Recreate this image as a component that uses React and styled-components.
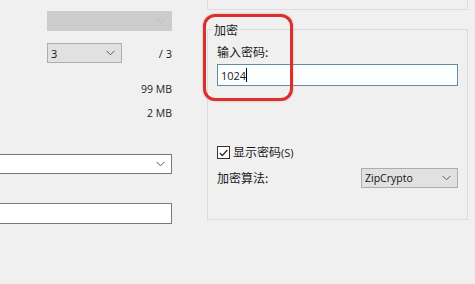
import React from 'react';
import styled, { createGlobalStyle } from 'styled-components';

const GlobalStyle = createGlobalStyle`
    html, body {
        margin: 0;
        padding: 0;
        background: #f0f0f0;
        overflow: hidden;
    }
    body {
        font-family: "Segoe UI", "Open Sans", "Noto Sans CJK SC", sans-serif;
        font-size: 10.5px;
        color: #1a1a1a;
    }
`

const Page = styled.div`
    position: relative;
    display: flex;
    width: 475px;
    height: 284px;
    background: #f0f0f0;
`

const LeftCol = styled.div`
    width: 172px;
    padding-top: 11px;
    display: flex;
    flex-direction: column;
`

const Select = styled.div`
    box-sizing: border-box;
    display: flex;
    align-items: center;
    justify-content: space-between;
    height: 20px;
    padding: 0 6px 0 3px;
    margin-left: ${p => p.$indent || 0}px;
    width: ${p => (p.$width ? `${p.$width}px` : 'auto')};
    background: ${p => (p.$variant === 'white' ? '#ffffff' : p.$variant === 'disabled' ? '#cccccc' : '#e1e1e1')};
    border: 1px solid ${p => (p.$variant === 'white' ? '#7a7a7a' : p.$variant === 'disabled' ? '#cccccc' : '#adadad')};
    border-left-width: ${p => (p.$cut ? 0 : 1)}px;
    color: #111;
`

const Chevron = ({ color = '#5a5a5a' }) => (
    <svg width="9" height="6" viewBox="0 0 9 6">
        <path d="M0.5 0.8 L4.5 4.8 L8.5 0.8" fill="none" stroke={color} strokeWidth="1" />
    </svg>
)

const PartsRow = styled.div`
    display: flex;
    align-items: center;
    justify-content: space-between;
    margin-top: 12px;
    margin-left: 47px;
    font-size: 11px;
`

const Value = styled.div`
    text-align: right;
    line-height: 16px;
    margin-top: ${p => p.$top}px;
`

const TextBox = styled.div`
    box-sizing: border-box;
    height: 21px;
    margin-top: ${p => p.$top}px;
    background: #ffffff;
    border: 1px solid #7a7a7a;
    border-left: 0;
`

const RightCol = styled.div`
    width: 261px;
    margin-left: 35px;
    display: flex;
    flex-direction: column;
`

const GroupTail = styled.div`
    height: 9px;
    border: 1px solid #dcdcdc;
    border-top: 0;
`

const Group = styled.fieldset`
    box-sizing: border-box;
    margin: 12px 0 0 0;
    padding: 0 9px;
    height: 198px;
    border: 1px solid #dcdcdc;
    display: flex;
    flex-direction: column;
`

const Legend = styled.legend`
    padding: 0 1px;
    margin-left: -4px;
    line-height: 15px;
    font-size: 12px;
    font-family: "Noto Sans CJK SC", sans-serif;
`

const Label = styled.div`
    font-family: "Noto Sans CJK SC", sans-serif;
    font-size: 12px;
    line-height: 16px;
    margin-top: ${p => p.$top || 0}px;
`

const PasswordInput = styled.div`
    box-sizing: border-box;
    display: flex;
    align-items: center;
    height: 22px;
    margin-top: 4px;
    padding-left: 3px;
    background: #fcffff;
    border: 1px solid #5f8fa0;
    font-size: 11px;
`

const Caret = styled.span`
    display: inline-block;
    width: 1px;
    height: 14px;
    background: #000;
`

const CheckRow = styled.div`
    display: flex;
    align-items: center;
    gap: 3px;
    margin-top: 58px;
`

const Box = styled.div`
    box-sizing: border-box;
    width: 13px;
    height: 13px;
    border: 1px solid #333;
    background: #fff;
    display: flex;
    align-items: center;
    justify-content: center;
`

const AlgoRow = styled.div`
    display: flex;
    align-items: center;
    justify-content: space-between;
    margin-top: 7px;
`

const Marker = styled.div`
    position: absolute;
    left: 203px;
    top: 14px;
    width: 90px;
    height: 87px;
    box-sizing: border-box;
    border: 3px solid #d9302e;
    border-radius: 12px;
    box-shadow: 0 0 2px rgba(200, 40, 40, 0.45);
    pointer-events: none;
`

const App = () => {
    return (
        <Page>
            <GlobalStyle />
            <LeftCol>
                <Select $variant="disabled" $indent={47}>
                    <span />
                    <Chevron color="#bdbdbd" />
                </Select>
                <PartsRow>
                    <Select $width={75}>
                        <span>3</span>
                        <Chevron />
                    </Select>
                    <span>/ 3</span>
                </PartsRow>
                <Value $top={18}>99 MB</Value>
                <Value $top={8}>2 MB</Value>
                <Select $variant="white" $cut style={{ marginTop: 33 }}>
                    <span />
                    <Chevron />
                </Select>
                <TextBox $top={29} />
            </LeftCol>
            <RightCol>
                <GroupTail />
                <Group>
                    <Legend>加密</Legend>
                    <Label $top={7}>输入密码:</Label>
                    <PasswordInput>
                        <span>1024</span>
                        <Caret />
                    </PasswordInput>
                    <CheckRow>
                        <Box>
                            <svg width="9" height="8" viewBox="0 0 9 8">
                                <path d="M0.8 4 L3.3 6.6 L8.3 1" fill="none" stroke="#222" strokeWidth="1.2" />
                            </svg>
                        </Box>
                        <Label>显示密码<span style={{ fontFamily: '"Open Sans", sans-serif', fontSize: 11 }}>(S)</span></Label>
                    </CheckRow>
                    <AlgoRow>
                        <Label>加密算法:</Label>
                        <Select $width={97}>
                            <span>ZipCrypto</span>
                            <Chevron />
                        </Select>
                    </AlgoRow>
                </Group>
            </RightCol>
            <Marker />
        </Page>
    );
}

export default App;
